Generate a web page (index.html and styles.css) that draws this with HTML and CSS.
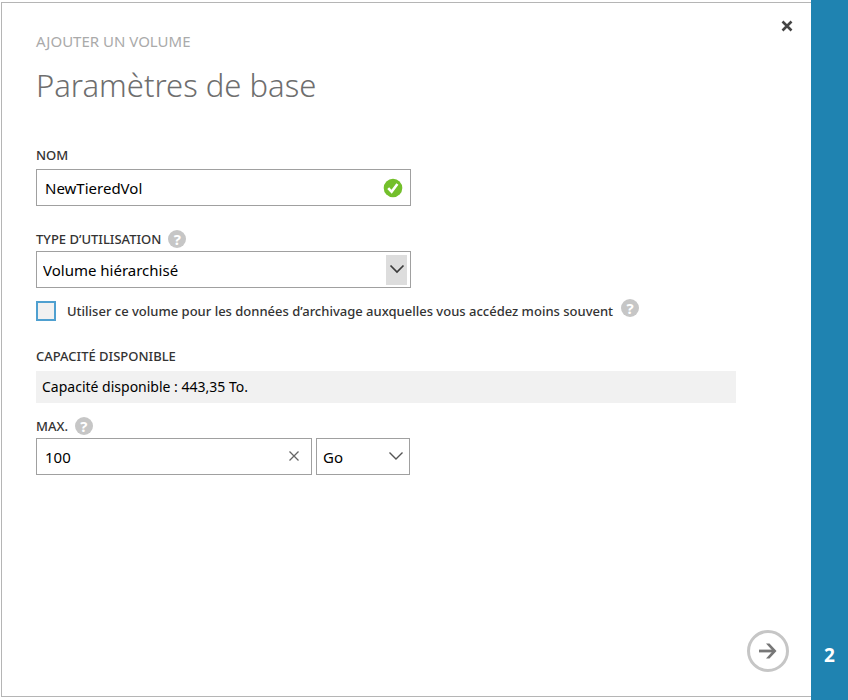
FILE: index.html
```html
<!DOCTYPE html>
<html lang="fr">
<head>
<meta charset="utf-8">
<meta name="viewport" content="width=device-width, initial-scale=1">
<title>Ajouter un volume</title>
<link rel="stylesheet" href="styles.css">
</head>
<body>
<main class="dialog">
  <header class="head">
    <div>
      <p class="kicker">AJOUTER UN VOLUME</p>
      <h1 class="title">Paramètres de base</h1>
    </div>
    <button class="close" type="button" aria-label="Fermer">
      <svg width="12" height="12" viewBox="0 0 12 12"><path d="M1.500 1.500l9 9M10.500 1.500l-9 9" fill="none" stroke="#444" stroke-width="2.600"/></svg>
    </button>
  </header>
  <form class="form">
    <div class="field">
      <label class="label" for="name">NOM</label>
      <div class="control">
        <input class="box" id="name" type="text" value="NewTieredVol">
        <svg class="valid" width="20" height="20" viewBox="0 0 20 20"><circle cx="10" cy="10" r="9.3" fill="#73bf2b"/><path d="M5.2 10.200l3.400 3.600L14.400 6" fill="none" stroke="#fff" stroke-width="2.600"/></svg>
      </div>
    </div>
    <div class="field">
      <div class="label-row">
        <label class="label" for="usage">TYPE D’UTILISATION</label>
        <button class="help" type="button" aria-label="Aide">?</button>
      </div>
      <div class="control">
        <select class="box box-select" id="usage"><option>Volume hiérarchisé</option></select>
        <span class="arrow arrow-filled"><svg width="16" height="10" viewBox="0 0 16 10"><path d="M1.500 1.500L8 8l6.500-6.500" fill="none" stroke="#3c3c3c" stroke-width="1.700"/></svg></span>
      </div>
    </div>
    <div class="check-row">
      <input class="check" id="archive" type="checkbox">
      <label class="check-label" for="archive">Utiliser ce volume pour les données d’archivage auxquelles vous accédez moins souvent</label>
      <button class="help help-raised" type="button" aria-label="Aide">?</button>
    </div>
    <div class="field capacity">
      <h2 class="label">CAPACITÉ DISPONIBLE</h2>
      <p class="available">Capacité disponible : 443,35 To.</p>
    </div>
    <div class="field">
      <div class="label-row">
        <label class="label" for="size">MAX.</label>
        <button class="help" type="button" aria-label="Aide">?</button>
      </div>
      <div class="size-row">
        <div class="control size">
          <input class="box" id="size" type="text" value="100">
          <button class="clear" type="button" aria-label="Effacer"><svg width="12" height="12" viewBox="0 0 12 12"><path d="M1.500 1.500l9 9M10.500 1.500l-9 9" fill="none" stroke="#666" stroke-width="1.300"/></svg></button>
        </div>
        <div class="control unit">
          <select class="box box-select" aria-label="Unité"><option>Go</option></select>
          <span class="arrow"><svg width="16" height="10" viewBox="0 0 16 10"><path d="M1.500 1.500L8 8l6.500-6.500" fill="none" stroke="#555" stroke-width="1.400"/></svg></span>
        </div>
      </div>
    </div>
  </form>
  <footer class="foot">
    <button class="next" type="button" aria-label="Suivant">
      <svg width="20" height="18" viewBox="0 0 20 18"><path d="M1 9h15" fill="none" stroke="#777" stroke-width="2.800"/><path d="M8 1.500h3.500L18.500 9l-7 7.500H8L14.800 9z" fill="#777"/></svg>
    </button>
  </footer>
</main>
<aside class="rail"><span class="step">2</span></aside>
</body>
</html>
```
FILE: styles.css
```css
* { box-sizing: border-box; }

body {
  display: flex;
  min-height: 100vh;
  margin: 0;
  background: #fff;
  color: #333;
  font-family: "Noto Sans", "Open Sans", sans-serif;
  font-size: 13px;
  line-height: 20px;
}

p, h1, h2 { margin: 0; }

button {
  display: flex;
  align-items: center;
  justify-content: center;
  padding: 0;
  border: 0;
  background: none;
  font-family: inherit;
}

.dialog {
  flex: 1;
  display: flex;
  flex-direction: column;
  min-width: 0;
  margin: 2px 0 3px 1px;
  padding: 0 22px 24px 34px;
  border: solid #b5b5b5;
  border-width: 1px 0 1px 1px;
}

.head {
  display: flex;
  justify-content: space-between;
  align-items: flex-start;
  padding-top: 13px;
}

.kicker {
  margin-top: 15px;
  color: #aaa;
  font-size: 15px;
}

.title {
  margin-top: 12px;
  color: #6e6e6e;
  font-size: 31px;
  font-weight: 300;
  line-height: 44px;
}

.close {
  width: 20px;
  height: 20px;
  margin-right: -8px;
}

.form {
  display: flex;
  flex-direction: column;
  padding-top: 38px;
}

.field + .field { margin-top: 23px; }

.label {
  display: block;
  color: #333;
  font-size: 13px;
  font-weight: 500;
  line-height: 20px;
}

.label-row {
  display: flex;
  align-items: center;
  gap: 7px;
}

.control {
  position: relative;
  max-width: 375px;
  margin-top: 4px;
}

.label-row + .control { margin-top: 2px; }

.box {
  display: block;
  width: 100%;
  height: 37px;
  padding: 0 36px 0 8px;
  border: 1px solid #a0a0a0;
  border-radius: 0;
  background: #fff;
  color: #000;
  font-family: inherit;
  font-size: 15px;
}

.box-select {
  appearance: none;
  padding-left: 6px;
}

.valid {
  position: absolute;
  top: 9px;
  right: 8px;
}

.arrow {
  position: absolute;
  top: 4px;
  right: 4px;
  display: flex;
  align-items: center;
  justify-content: center;
  width: 21px;
  height: 30px;
  padding-bottom: 2px;
  pointer-events: none;
}

.arrow-filled { background: #ddd; }

.help {
  flex: none;
  width: 18px;
  height: 18px;
  border-radius: 50%;
  background: #c6c6c6;
  color: #fff;
  font-size: 15px;
  font-weight: 700;
  line-height: 18px;
}

.check-row {
  display: flex;
  align-items: center;
  margin-top: 13px;
}

.check {
  appearance: none;
  flex: none;
  width: 20px;
  height: 20px;
  margin: 0 11px 0 0;
  border: 2px solid #4fa0d0;
  background: #f1f1f1;
}

.check-label {
  font-size: 13px;
  font-weight: 500;
}

.help-raised {
  align-self: flex-start;
  margin: -2px 0 0 8px;
}

.capacity { margin-top: 25px; }

.available {
  max-width: 700px;
  margin-top: 5px;
  padding: 6px;
  background: #f1f1f1;
  color: #000;
  font-size: 14px;
}

.capacity + .field { margin-top: 13px; }

.size-row {
  display: flex;
  gap: 4px;
  max-width: 374px;
  margin-top: 2px;
}

.size-row .control { margin-top: 0; }

.size { flex: 1; }

.unit { width: 94px; }

.clear {
  position: absolute;
  top: 8px;
  right: 8px;
  width: 20px;
  height: 20px;
}

.foot {
  display: flex;
  justify-content: flex-end;
  margin-top: auto;
}

.next {
  width: 42px;
  height: 42px;
  border: 3px solid #c6c6c6;
  border-radius: 50%;
}

.rail {
  flex: none;
  display: flex;
  align-items: flex-end;
  justify-content: center;
  width: 37px;
  padding-bottom: 35px;
  background: #1f83b1;
}

.step {
  color: #fff;
  font-size: 19px;
  font-weight: 700;
}
```
